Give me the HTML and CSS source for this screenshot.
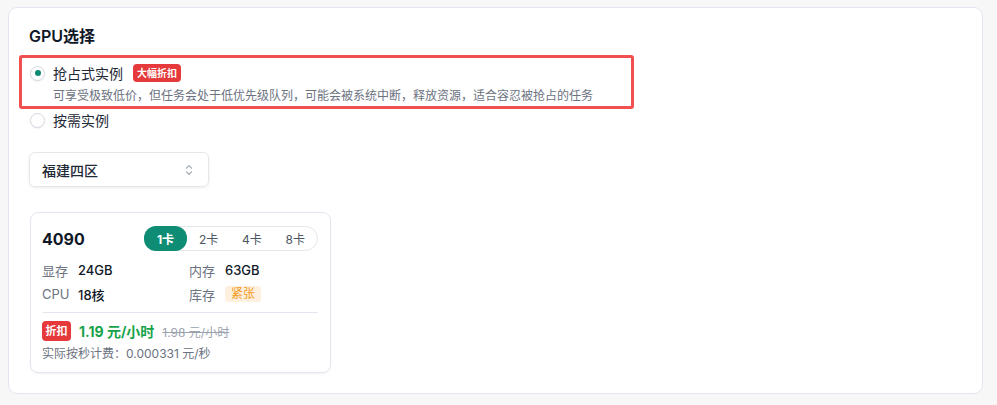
FILE: index.html
```html
<!DOCTYPE html>
<html lang="zh-CN">
<head>
<meta charset="utf-8">
<title>GPU选择</title>
<link rel="stylesheet" href="styles.css">
</head>
<body>
<div class="panel">
  <h2 class="title">GPU选择</h2>
  <div class="options">
    <div class="option option-highlight">
      <div class="option-row">
        <span class="radio checked"></span>
        <span class="option-label">抢占式实例</span>
        <span class="badge-red">大幅折扣</span>
      </div>
      <div class="option-desc">可享受极致低价，但任务会处于低优先级队列，可能会被系统中断，释放资源，适合容忍被抢占的任务</div>
      <div class="annot"></div>
    </div>
    <div class="option option-second">
      <div class="option-row">
        <span class="radio"></span>
        <span class="option-label">按需实例</span>
      </div>
    </div>
  </div>

  <div class="select">
    <span class="select-text">福建四区</span>
    <svg class="select-icon" width="8" height="12" viewBox="0 0 8 12" fill="none" stroke="#9ca3af" stroke-width="1.1" stroke-linecap="round" stroke-linejoin="round"><path d="M1.5 4.2 L4 1.7 L6.5 4.2"/><path d="M1.5 7.8 L4 10.3 L6.5 7.8"/></svg>
  </div>

  <div class="gpu-card">
    <div class="gpu-head">
      <span class="gpu-name">4090</span>
      <div class="seg">
        <span class="seg-item active">1卡</span>
        <span class="seg-item">2卡</span>
        <span class="seg-item">4卡</span>
        <span class="seg-item">8卡</span>
      </div>
    </div>
    <div class="specs">
      <div class="spec"><span class="spec-label">显存</span><span class="spec-value">24GB</span></div>
      <div class="spec"><span class="spec-label">内存</span><span class="spec-value">63GB</span></div>
      <div class="spec"><span class="spec-label">CPU</span><span class="spec-value">18核</span></div>
      <div class="spec"><span class="spec-label">库存</span><span class="badge-orange">紧张</span></div>
    </div>
    <div class="divider"></div>
    <div class="price-row">
      <span class="badge-discount">折扣</span>
      <span class="price">1.19 元/小时</span>
      <span class="price-old">1.98 元/小时</span>
    </div>
    <div class="per-second">实际按秒计费：0.000331 元/秒</div>
  </div>
</div>
</body>
</html>
```

FILE: styles.css
```css
* { box-sizing: border-box; }
html, body { margin: 0; padding: 0; }
body {
  background: #f7f7f8;
  font-family: "Inter", "Noto Sans CJK SC", sans-serif;
  color: #111827;
  width: 997px;
  height: 405px;
  overflow: hidden;
}
.panel {
  margin: 7px 0 0 8px;
  width: 975px;
  height: 387px;
  background: #fff;
  border: 1px solid #e3e6ee;
  border-radius: 9px;
  padding: 18px 20px;
}
.title {
  margin: 0;
  font-size: 16px;
  line-height: 20px;
  font-weight: 600;
  color: #111827;
}
.options {
  margin-top: 16px;
  padding-left: 1px;
}
.option { position: relative; }
.option-row {
  display: flex;
  align-items: center;
  height: 22px;
}
.radio {
  width: 15px;
  height: 15px;
  border-radius: 50%;
  border: 1px solid #d6d9e0;
  background: #fff;
  box-shadow: 0 1px 2px rgba(0,0,0,0.06);
  display: flex;
  align-items: center;
  justify-content: center;
  flex: none;
}
.radio.checked::after {
  content: "";
  width: 6px;
  height: 6px;
  border-radius: 50%;
  background: #0e8a72;
}
.option-label {
  margin-left: 8px;
  font-size: 14px;
  color: #1f2937;
}
.badge-red {
  margin-left: 10px;
  height: 18px;
  line-height: 18px;
  padding: 0 4px;
  border-radius: 4px;
  background: #e5393b;
  color: #fff;
  font-size: 10px;
  font-weight: 700;
}
.option-desc {
  margin: 3px 0 0 23px;
  font-size: 12px;
  line-height: 18px;
  color: #6b7280;
}
.annot {
  position: absolute;
  top: -7px;
  left: -11px;
  width: 615px;
  bottom: -4px;
  border: 3px solid #f24f51;
  border-radius: 3px;
  pointer-events: none;
}
.option-second { margin-top: 4px; }

.select {
  margin-top: 21px;
  width: 180px;
  height: 35px;
  border: 1px solid #e5e7eb;
  border-radius: 6px;
  box-shadow: 0 1px 3px rgba(0,0,0,0.08);
  display: flex;
  align-items: center;
  justify-content: space-between;
  padding: 0 15px 0 12px;
}
.select-text {
  font-size: 14px;
  font-weight: 500;
  color: #1f2937;
}

.gpu-card {
  margin: 25px 0 0 1px;
  width: 301px;
  height: 161px;
  border: 1px solid #e3e6ee;
  border-radius: 8px;
  box-shadow: 0 1px 2px rgba(0,0,0,0.05);
  padding: 13px 12px 11px 12px;
}
.gpu-head {
  display: flex;
  align-items: center;
  justify-content: space-between;
  height: 25px;
}
.gpu-name {
  font-size: 16px;
  font-weight: 700;
  color: #111827;
  margin-left: -1px;
}
.seg {
  display: flex;
  width: 174px;
  height: 25px;
  border: 1px solid #e5e7eb;
  border-radius: 13px;
}
.seg-item {
  flex: 1;
  display: flex;
  align-items: center;
  justify-content: center;
  font-size: 12px;
  color: #4b5563;
  border-radius: 12px;
}
.seg-item.active {
  margin: -1px 0 -1px -1px;
  flex: 0 0 43px;
  background: #0e8c74;
  color: #fff;
  font-weight: 700;
}
.specs {
  margin-top: 9px;
  display: grid;
  grid-template-columns: 147px 1fr;
  row-gap: 4px;
}
.spec {
  display: flex;
  align-items: center;
  height: 20px;
  margin-left: -1px;
}
.spec-label {
  font-size: 13px;
  color: #6b7280;
  width: 36px;
  flex: none;
}
.spec-value {
  font-size: 13px;
  font-weight: 500;
  color: #111827;
}
.badge-orange {
  height: 16px;
  line-height: 16px;
  padding: 0 6px;
  border-radius: 3px;
  background: #fdf0df;
  color: #f39a1b;
  font-size: 12px;
}
.divider {
  margin-top: 8px;
  height: 1px;
  background: #e3e6ee;
}
.price-row {
  margin-top: 8px;
  display: flex;
  align-items: center;
  height: 20px;
  margin-left: -1px;
}
.badge-discount {
  height: 20px;
  line-height: 20px;
  padding: 0 3px;
  width: 29px;
  text-align: center;
  border-radius: 4px;
  background: #e5393b;
  color: #fff;
  font-size: 11px;
  font-weight: 700;
}
.price {
  margin-left: 8px;
  font-size: 14px;
  font-weight: 700;
  color: #17a34a;
}
.price-old {
  margin-left: 8px;
  font-size: 12px;
  color: #9ca3af;
  text-decoration: line-through;
}
.per-second {
  margin-top: 4px;
  margin-left: -1px;
  font-size: 12px;
  line-height: 18px;
  color: #6b7280;
}
```
